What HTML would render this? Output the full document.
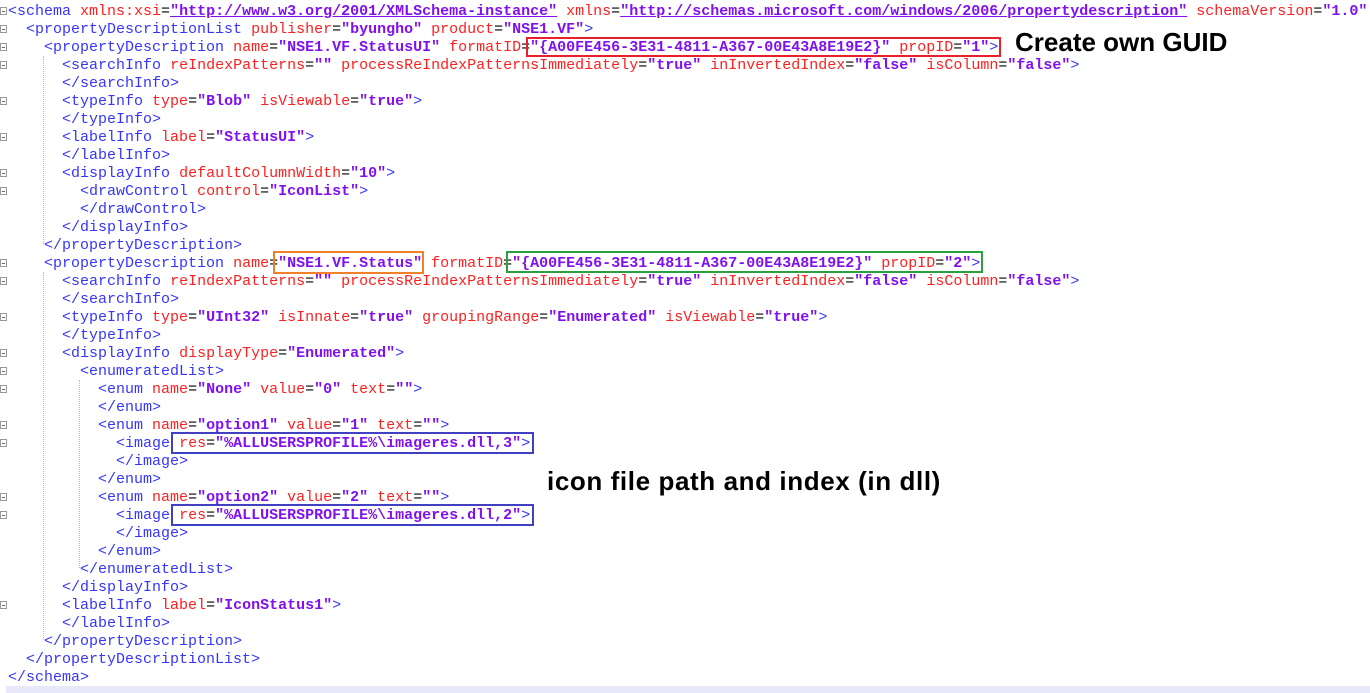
<!DOCTYPE html>
<html><head><meta charset="utf-8"><style>
html,body{margin:0;padding:0;background:#fff;width:1370px;height:693px;overflow:hidden;position:relative}
.code{position:absolute;left:8px;top:3px;font-family:"Liberation Mono","Courier New",monospace;font-size:15px;line-height:18px;white-space:pre;color:#000;letter-spacing:0}
.t{color:#3535ff}.a{color:#ff2020}.v{color:#8010f0;font-weight:bold}.u{text-decoration:underline}
.g{position:absolute;left:0;width:7px;height:8px;border:1px solid #999;box-sizing:border-box;background:#fff}
.g:after{content:"";position:absolute;left:1px;top:3px;width:3px;height:1px;background:#666}
.box{position:absolute;border:2px solid;box-sizing:border-box}
.ann{position:absolute;font-family:"Liberation Sans","NanumGothic",sans-serif;font-weight:bold;font-size:26px;color:#000;white-space:nowrap}
.guide{position:absolute;border-left:1px dotted #bbb}
.hl{position:absolute;left:6px;top:686px;width:1364px;height:7px;background:#e8e8f8}
</style></head><body>
<div class="hl"></div>
<div class="guide" style="left:43px;top:56px;height:188px"></div>
<div class="guide" style="left:43px;top:272px;height:368px"></div>
<div class="guide" style="left:79px;top:380px;height:188px"></div>
<div class="code"><span class="t">&lt;schema</span> <span class="a">xmlns:xsi</span>=<span class="v u">"http://www.w3.org/2001/XMLSchema-instance"</span> <span class="a">xmlns</span>=<span class="v u">"http://schemas.microsoft.com/windows/2006/propertydescription"</span> <span class="a">schemaVersion</span>=<span class="v">"1.0"</span>
  <span class="t">&lt;propertyDescriptionList</span> <span class="a">publisher</span>=<span class="v">"byungho"</span> <span class="a">product</span>=<span class="v">"NSE1.VF"</span><span class="t">&gt;</span>
    <span class="t">&lt;propertyDescription</span> <span class="a">name</span>=<span class="v">"NSE1.VF.StatusUI"</span> <span class="a">formatID</span>=<span class="v">"{A00FE456-3E31-4811-A367-00E43A8E19E2}"</span> <span class="a">propID</span>=<span class="v">"1"</span><span class="t">&gt;</span>
      <span class="t">&lt;searchInfo</span> <span class="a">reIndexPatterns</span>=<span class="v">""</span> <span class="a">processReIndexPatternsImmediately</span>=<span class="v">"true"</span> <span class="a">inInvertedIndex</span>=<span class="v">"false"</span> <span class="a">isColumn</span>=<span class="v">"false"</span><span class="t">&gt;</span>
      <span class="t">&lt;/searchInfo&gt;</span>
      <span class="t">&lt;typeInfo</span> <span class="a">type</span>=<span class="v">"Blob"</span> <span class="a">isViewable</span>=<span class="v">"true"</span><span class="t">&gt;</span>
      <span class="t">&lt;/typeInfo&gt;</span>
      <span class="t">&lt;labelInfo</span> <span class="a">label</span>=<span class="v">"StatusUI"</span><span class="t">&gt;</span>
      <span class="t">&lt;/labelInfo&gt;</span>
      <span class="t">&lt;displayInfo</span> <span class="a">defaultColumnWidth</span>=<span class="v">"10"</span><span class="t">&gt;</span>
        <span class="t">&lt;drawControl</span> <span class="a">control</span>=<span class="v">"IconList"</span><span class="t">&gt;</span>
        <span class="t">&lt;/drawControl&gt;</span>
      <span class="t">&lt;/displayInfo&gt;</span>
    <span class="t">&lt;/propertyDescription&gt;</span>
    <span class="t">&lt;propertyDescription</span> <span class="a">name</span>=<span class="v">"NSE1.VF.Status"</span> <span class="a">formatID</span>=<span class="v">"{A00FE456-3E31-4811-A367-00E43A8E19E2}"</span> <span class="a">propID</span>=<span class="v">"2"</span><span class="t">&gt;</span>
      <span class="t">&lt;searchInfo</span> <span class="a">reIndexPatterns</span>=<span class="v">""</span> <span class="a">processReIndexPatternsImmediately</span>=<span class="v">"true"</span> <span class="a">inInvertedIndex</span>=<span class="v">"false"</span> <span class="a">isColumn</span>=<span class="v">"false"</span><span class="t">&gt;</span>
      <span class="t">&lt;/searchInfo&gt;</span>
      <span class="t">&lt;typeInfo</span> <span class="a">type</span>=<span class="v">"UInt32"</span> <span class="a">isInnate</span>=<span class="v">"true"</span> <span class="a">groupingRange</span>=<span class="v">"Enumerated"</span> <span class="a">isViewable</span>=<span class="v">"true"</span><span class="t">&gt;</span>
      <span class="t">&lt;/typeInfo&gt;</span>
      <span class="t">&lt;displayInfo</span> <span class="a">displayType</span>=<span class="v">"Enumerated"</span><span class="t">&gt;</span>
        <span class="t">&lt;enumeratedList&gt;</span>
          <span class="t">&lt;enum</span> <span class="a">name</span>=<span class="v">"None"</span> <span class="a">value</span>=<span class="v">"0"</span> <span class="a">text</span>=<span class="v">""</span><span class="t">&gt;</span>
          <span class="t">&lt;/enum&gt;</span>
          <span class="t">&lt;enum</span> <span class="a">name</span>=<span class="v">"option1"</span> <span class="a">value</span>=<span class="v">"1"</span> <span class="a">text</span>=<span class="v">""</span><span class="t">&gt;</span>
            <span class="t">&lt;image</span> <span class="a">res</span>=<span class="v">"%ALLUSERSPROFILE%\imageres.dll,3"</span><span class="t">&gt;</span>
            <span class="t">&lt;/image&gt;</span>
          <span class="t">&lt;/enum&gt;</span>
          <span class="t">&lt;enum</span> <span class="a">name</span>=<span class="v">"option2"</span> <span class="a">value</span>=<span class="v">"2"</span> <span class="a">text</span>=<span class="v">""</span><span class="t">&gt;</span>
            <span class="t">&lt;image</span> <span class="a">res</span>=<span class="v">"%ALLUSERSPROFILE%\imageres.dll,2"</span><span class="t">&gt;</span>
            <span class="t">&lt;/image&gt;</span>
          <span class="t">&lt;/enum&gt;</span>
        <span class="t">&lt;/enumeratedList&gt;</span>
      <span class="t">&lt;/displayInfo&gt;</span>
      <span class="t">&lt;labelInfo</span> <span class="a">label</span>=<span class="v">"IconStatus1"</span><span class="t">&gt;</span>
      <span class="t">&lt;/labelInfo&gt;</span>
    <span class="t">&lt;/propertyDescription&gt;</span>
  <span class="t">&lt;/propertyDescriptionList&gt;</span>
<span class="t">&lt;/schema&gt;</span></div>
<div class="g" style="top:7px"></div><div class="g" style="top:25px"></div><div class="g" style="top:43px"></div><div class="g" style="top:61px"></div>
<div class="g" style="top:97px"></div><div class="g" style="top:133px"></div><div class="g" style="top:169px"></div><div class="g" style="top:187px"></div>
<div class="g" style="top:259px"></div><div class="g" style="top:277px"></div><div class="g" style="top:313px"></div><div class="g" style="top:349px"></div>
<div class="g" style="top:367px"></div><div class="g" style="top:385px"></div><div class="g" style="top:421px"></div><div class="g" style="top:439px"></div>
<div class="g" style="top:493px"></div><div class="g" style="top:511px"></div><div class="g" style="top:601px"></div>
<div class="box" style="border-color:#e8202a;left:526px;top:37px;width:475px;height:20px"></div>
<div class="box" style="border-color:#f0802a;left:273px;top:251px;width:151px;height:23px"></div>
<div class="box" style="border-color:#2aa040;left:506px;top:251px;width:477px;height:22px"></div>
<div class="box" style="border-color:#4040c0;left:171px;top:432px;width:363px;height:22px"></div>
<div class="box" style="border-color:#4040c0;left:171px;top:504px;width:363px;height:22px"></div>
<div class="ann" style="left:1015px;top:27px">Create own GUID</div>
<div class="ann" style="left:547px;top:466px;letter-spacing:0.6px">icon file path and index (in dll)</div>
</body></html>
